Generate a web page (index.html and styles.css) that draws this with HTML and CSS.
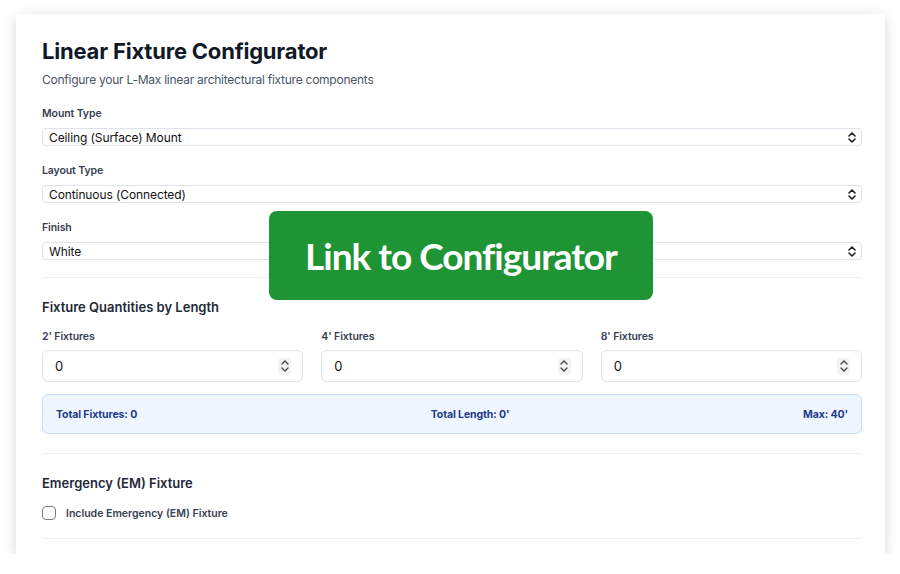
FILE: index.html
```html
<!DOCTYPE html>
<html lang="en">
<head>
    <meta charset="UTF-8">
    <meta name="viewport" content="width=device-width, initial-scale=1.0">
    <title>Linear Fixture Configurator</title>
    <link rel="stylesheet" href="styles.css">
</head>
<body>
    <div class="card">
        <h1>Linear Fixture Configurator</h1>
        <p class="subtitle">Configure your L-Max linear architectural fixture components</p>

        <!-- Selects -->
        <div class="field">
            <label>Mount Type</label>
            <div class="select">
                <span>Ceiling (Surface) Mount</span>
                <svg width="8" height="11" viewBox="0 0 8 11"><path d="M1 4 L4 1 L7 4 M1 7 L4 10 L7 7" fill="none" stroke="#222" stroke-width="1.6" stroke-linecap="round" stroke-linejoin="round"/></svg>
            </div>
        </div>

        <div class="field">
            <label>Layout Type</label>
            <div class="select">
                <span>Continuous (Connected)</span>
                <svg width="8" height="11" viewBox="0 0 8 11"><path d="M1 4 L4 1 L7 4 M1 7 L4 10 L7 7" fill="none" stroke="#222" stroke-width="1.6" stroke-linecap="round" stroke-linejoin="round"/></svg>
            </div>
        </div>

        <div class="field">
            <label>Finish</label>
            <div class="select">
                <span>White</span>
                <svg width="8" height="11" viewBox="0 0 8 11"><path d="M1 4 L4 1 L7 4 M1 7 L4 10 L7 7" fill="none" stroke="#222" stroke-width="1.6" stroke-linecap="round" stroke-linejoin="round"/></svg>
            </div>
        </div>

        <hr>

        <!-- Quantites -->
        <h2>Fixture Quantities by Length</h2>
        <div class="qty-grid">
            <div class="qty">
                <label>2' Fixtures</label>
                <div class="number">
                    <span>0</span>
                    <span class="spin"><svg width="8" height="14" viewBox="0 0 8 14"><path d="M1 5 L4 2 L7 5 M1 9 L4 12 L7 9" fill="none" stroke="#444" stroke-width="1.3" stroke-linecap="round" stroke-linejoin="round"/></svg></span>
                </div>
            </div>
            <div class="qty">
                <label>4' Fixtures</label>
                <div class="number">
                    <span>0</span>
                    <span class="spin"><svg width="8" height="14" viewBox="0 0 8 14"><path d="M1 5 L4 2 L7 5 M1 9 L4 12 L7 9" fill="none" stroke="#444" stroke-width="1.3" stroke-linecap="round" stroke-linejoin="round"/></svg></span>
                </div>
            </div>
            <div class="qty">
                <label>8' Fixtures</label>
                <div class="number">
                    <span>0</span>
                    <span class="spin"><svg width="8" height="14" viewBox="0 0 8 14"><path d="M1 5 L4 2 L7 5 M1 9 L4 12 L7 9" fill="none" stroke="#444" stroke-width="1.3" stroke-linecap="round" stroke-linejoin="round"/></svg></span>
                </div>
            </div>
        </div>

        <div class="summary">
            <span>Total Fixtures: 0</span>
            <span>Total Length: 0'</span>
            <span>Max: 40'</span>
        </div>

        <hr>

        <!-- Secours -->
        <h2 class="em-title">Emergency (EM) Fixture</h2>
        <div class="check">
            <span class="box"></span>
            <span>Include Emergency (EM) Fixture</span>
        </div>

        <hr class="last">

        <a class="cta" href="#">Link to Configurator</a>
    </div>
</body>
</html>
```

FILE: styles.css
```css
body {
    margin: 0;
    padding: 0;
    background-color: #fff;
    font-family: Inter, "Noto Sans", sans-serif;
    color: #111827;
}

.card {
    position: relative;
    width: 869px;
    height: 540px;
    margin: 14px 0 0 16px;
    box-sizing: border-box;
    padding: 23px 23px 0 26px;
    background: #fff;
    box-shadow: 0 3px 12px rgba(0, 0, 0, 0.16);
    overflow: hidden;
}

h1 {
    font-size: 22px;
    line-height: 28px;
    font-weight: 700;
    margin: 0;
    color: #111827;
    letter-spacing: -0.2px;
}

.subtitle {
    font-size: 12px;
    line-height: 20px;
    margin: 5px 0 16px;
    color: #4b5563;
    letter-spacing: -0.25px;
}

label {
    display: block;
    font-size: 10.5px;
    line-height: 16px;
    font-weight: 600;
    color: #374151;
    letter-spacing: -0.1px;
}

.field {
    margin-bottom: 17px;
}

.field label {
    margin-bottom: 6px;
}

.select {
    display: flex;
    justify-content: space-between;
    align-items: center;
    height: 18px;
    box-sizing: border-box;
    padding: 0 5px 0 6px;
    border: 1px solid #dde3ea;
    border-radius: 4px;
    font-size: 12px;
    letter-spacing: -0.1px;
    color: #111;
}

hr {
    border: none;
    border-top: 1.5px solid #edf0f4;
    margin: 18px 0 0;
}

.field + hr {
    margin-top: 1px;
}

h2 {
    font-size: 13px;
    line-height: 20px;
    font-weight: 600;
    margin: 19px 0 12px;
    color: #1f2937;
}

.qty-grid {
    display: grid;
    grid-template-columns: 1fr 1fr 1fr;
    gap: 18px;
}

.qty label {
    margin-bottom: 5px;
}

.number {
    display: flex;
    justify-content: space-between;
    align-items: center;
    height: 32px;
    box-sizing: border-box;
    padding: 0 11px 0 12px;
    border: 1px solid #dde3ea;
    border-radius: 6px;
    font-size: 13px;
    color: #111;
}

.spin {
    display: flex;
    align-items: center;
    justify-content: center;
    width: 13px;
    height: 17px;
    border-radius: 4px;
    background: #f1f2f4;
}

.summary {
    display: flex;
    justify-content: space-between;
    align-items: center;
    height: 40px;
    box-sizing: border-box;
    margin-top: 12px;
    padding: 0 13px;
    background: #eff6ff;
    border: 1px solid #c7dcfb;
    border-radius: 6px;
    font-size: 10.5px;
    letter-spacing: -0.1px;
    font-weight: 700;
    color: #1e3a8a;
}

.summary + hr {
    margin-top: 19px;
}

.em-title {
    margin-bottom: 13px;
}

.check {
    display: flex;
    align-items: center;
    gap: 10px;
    font-size: 10.5px;
    font-weight: 600;
    color: #374151;
}

.check .box {
    width: 14px;
    height: 14px;
    box-sizing: border-box;
    border: 1.5px solid #7b8088;
    border-radius: 4px;
}

hr.last {
    margin-top: 18px;
}

.cta {
    position: absolute;
    left: 253px;
    top: 197px;
    width: 384px;
    height: 89px;
    display: flex;
    align-items: center;
    justify-content: center;
    background: #1e9435;
    border-radius: 8px;
    color: #fff;
    text-decoration: none;
    font-family: Lato, "Noto Sans", sans-serif;
    font-weight: 700;
    font-size: 37px;
    letter-spacing: -1px;
}
```
